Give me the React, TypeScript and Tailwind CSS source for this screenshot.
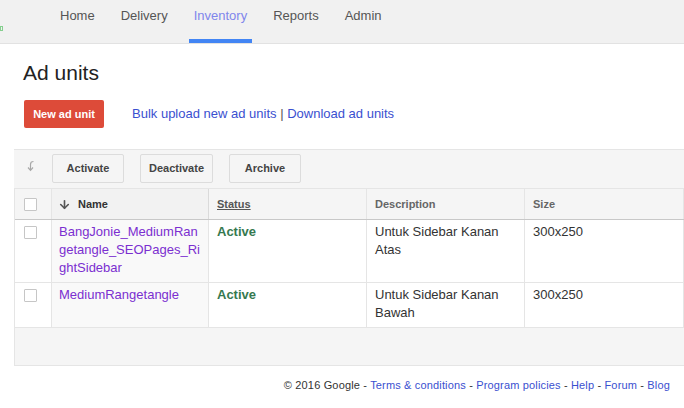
import { ArrowDown } from 'lucide-react';

type AdUnit = {
    name: string;
    status: string;
    description: string;
    size: string;
};

const TABS = ['Home', 'Delivery', 'Inventory', 'Reports', 'Admin'];

const AD_UNITS: AdUnit[] = [
    {
        name: 'BangJonie_MediumRangetangle_SEOPages_RightSidebar',
        status: 'Active',
        description: 'Untuk Sidebar Kanan Atas',
        size: '300x250',
    },
    {
        name: 'MediumRangetangle',
        status: 'Active',
        description: 'Untuk Sidebar Kanan Bawah',
        size: '300x250',
    },
];

const Checkbox = () => (
    <div className="w-[13px] h-[13px] border border-[#c6c6c6] bg-white rounded-[1px]" />
);

const ToolbarButton = ({ label, width }: { label: string; width: string }) => (
    <button className={`${width} h-[29px] border border-[#dcdcdc] bg-[#f5f5f5] rounded-[2px] text-[11px] font-bold text-[#444]`}>
        {label}
    </button>
);

const App = () => {
    return (
        <div className="w-[684px] h-[408px] overflow-hidden bg-white font-['Liberation_Sans',Arial,sans-serif]">
            <nav className="flex h-[44px] bg-[#f1f1f1] border-b border-[#e2e2e2]">
                <div className="w-[55px] pt-[26px]">
                    <div className="w-[3px] h-[5px] border border-[#86cf8f]" />
                </div>
                <div className="flex gap-4">
                    {TABS.map((tab) =>
                        tab === 'Inventory' ? (
                            <a key={tab} className="h-[43px] px-[5px] pt-[7px] text-[13px] leading-[18px] text-[#7f86ec] border-b-4 border-[#4285f4]">
                                {tab}
                            </a>
                        ) : (
                            <a key={tab} className="h-[43px] px-[5px] pt-[7px] text-[13px] leading-[18px] text-[#555]">
                                {tab}
                            </a>
                        )
                    )}
                </div>
            </nav>

            <h1 className="mt-[17px] ml-[23px] text-[21px] leading-[24px] text-[#222]">Ad units</h1>

            <div className="mt-[15px] ml-[24px] flex items-center">
                <button className="w-[80px] h-[28px] bg-[#dd4b39] rounded-[2px] text-white text-[11px] font-bold">
                    New ad unit
                </button>
                <div className="ml-[28px] text-[13px] text-[#3a50d0]">
                    <a>Bulk upload new ad units</a>
                    <span className="text-[#555]"> | </span>
                    <a>Download ad units</a>
                </div>
            </div>

            <div className="mt-[21px] ml-[14px] overflow-hidden">
                <div className="w-[870px]">
                    <div className="flex items-start gap-4 h-[39px] pt-[4px] pl-[12px] bg-[#f5f5f5] border-t border-[#e5e5e5]">
                        <svg width="10" height="12" viewBox="0 0 10 12" className="mt-[6px]" fill="none" stroke="#a8a8a8" strokeWidth="1.2">
                            <path d="M7.5 1.5 Q4.5 1.5 4.5 4.5 V10" />
                            <path d="M2 7.5 L4.5 10.3 L7 7.5" />
                        </svg>
                        <ToolbarButton label="Activate" width="w-[72px]" />
                        <ToolbarButton label="Deactivate" width="w-[73px]" />
                        <ToolbarButton label="Archive" width="w-[72px]" />
                    </div>

                    <div className="border-l border-[#e5e5e5]">
                        <div className="flex h-[32px] bg-[#f5f5f5] border-t border-b border-t-[#e5e5e5] border-b-[#c8c8c8] text-[11px] font-bold">
                            <div className="w-[37px] border-r border-[#e5e5e5] flex items-center pl-[9px]">
                                <Checkbox />
                            </div>
                            <div className="w-[157px] border-r border-[#dadada] bg-[#f2f2f2] flex items-center pl-[6px] gap-[7px] text-[#333]">
                                <ArrowDown size={13} strokeWidth={3} color="#555" />
                                <span>Name</span>
                            </div>
                            <div className="w-[158px] border-r border-[#e5e5e5] flex items-center pl-[8px] text-[#555]">
                                <span className="underline">Status</span>
                            </div>
                            <div className="w-[158px] border-r border-[#e5e5e5] flex items-center pl-[8px] text-[#666]">
                                Description
                            </div>
                            <div className="w-[159px] border-r border-[#e5e5e5] flex items-center pl-[8px] text-[#666]">
                                Size
                            </div>
                            <div className="flex-1" />
                        </div>

                        {AD_UNITS.map((unit) => (
                            <div key={unit.name} className="flex border-b border-[#e5e5e5] text-[13px] leading-[18px]">
                                <div className="w-[37px] border-r border-[#e5e5e5] pt-[6px] pl-[9px]">
                                    <Checkbox />
                                </div>
                                <div className="w-[157px] border-r border-[#e5e5e5] bg-[#f9f9f9] pt-[3px] pb-[5px] pl-[7px] pr-[6px] break-all text-[#7b2fd0]">
                                    {unit.name}
                                </div>
                                <div className="w-[158px] border-r border-[#e5e5e5] pt-[3px] pb-[5px] px-[8px] font-bold text-[#36794f]">
                                    {unit.status}
                                </div>
                                <div className="w-[158px] border-r border-[#e5e5e5] pt-[3px] pb-[5px] px-[8px] text-[#333]">
                                    {unit.description}
                                </div>
                                <div className="w-[159px] border-r border-[#e5e5e5] pt-[3px] pb-[5px] px-[8px] text-[#333]">
                                    {unit.size}
                                </div>
                                <div className="flex-1" />
                            </div>
                        ))}

                        <div className="h-[38px] bg-[#f5f5f5] border-b border-[#e5e5e5]" />
                    </div>
                </div>
            </div>

            <footer className="mt-[12px] pr-[14px] text-right text-[11px] leading-[14px] tracking-[0.16px] text-[#333]">
                © 2016 Google - <a className="text-[#3a50d0]">Terms &amp; conditions</a> -{' '}
                <a className="text-[#3a50d0]">Program policies</a> - <a className="text-[#3a50d0]">Help</a> -{' '}
                <a className="text-[#3a50d0]">Forum</a> - <a className="text-[#3a50d0]">Blog</a>
            </footer>
        </div>
    );
};

export default App;
